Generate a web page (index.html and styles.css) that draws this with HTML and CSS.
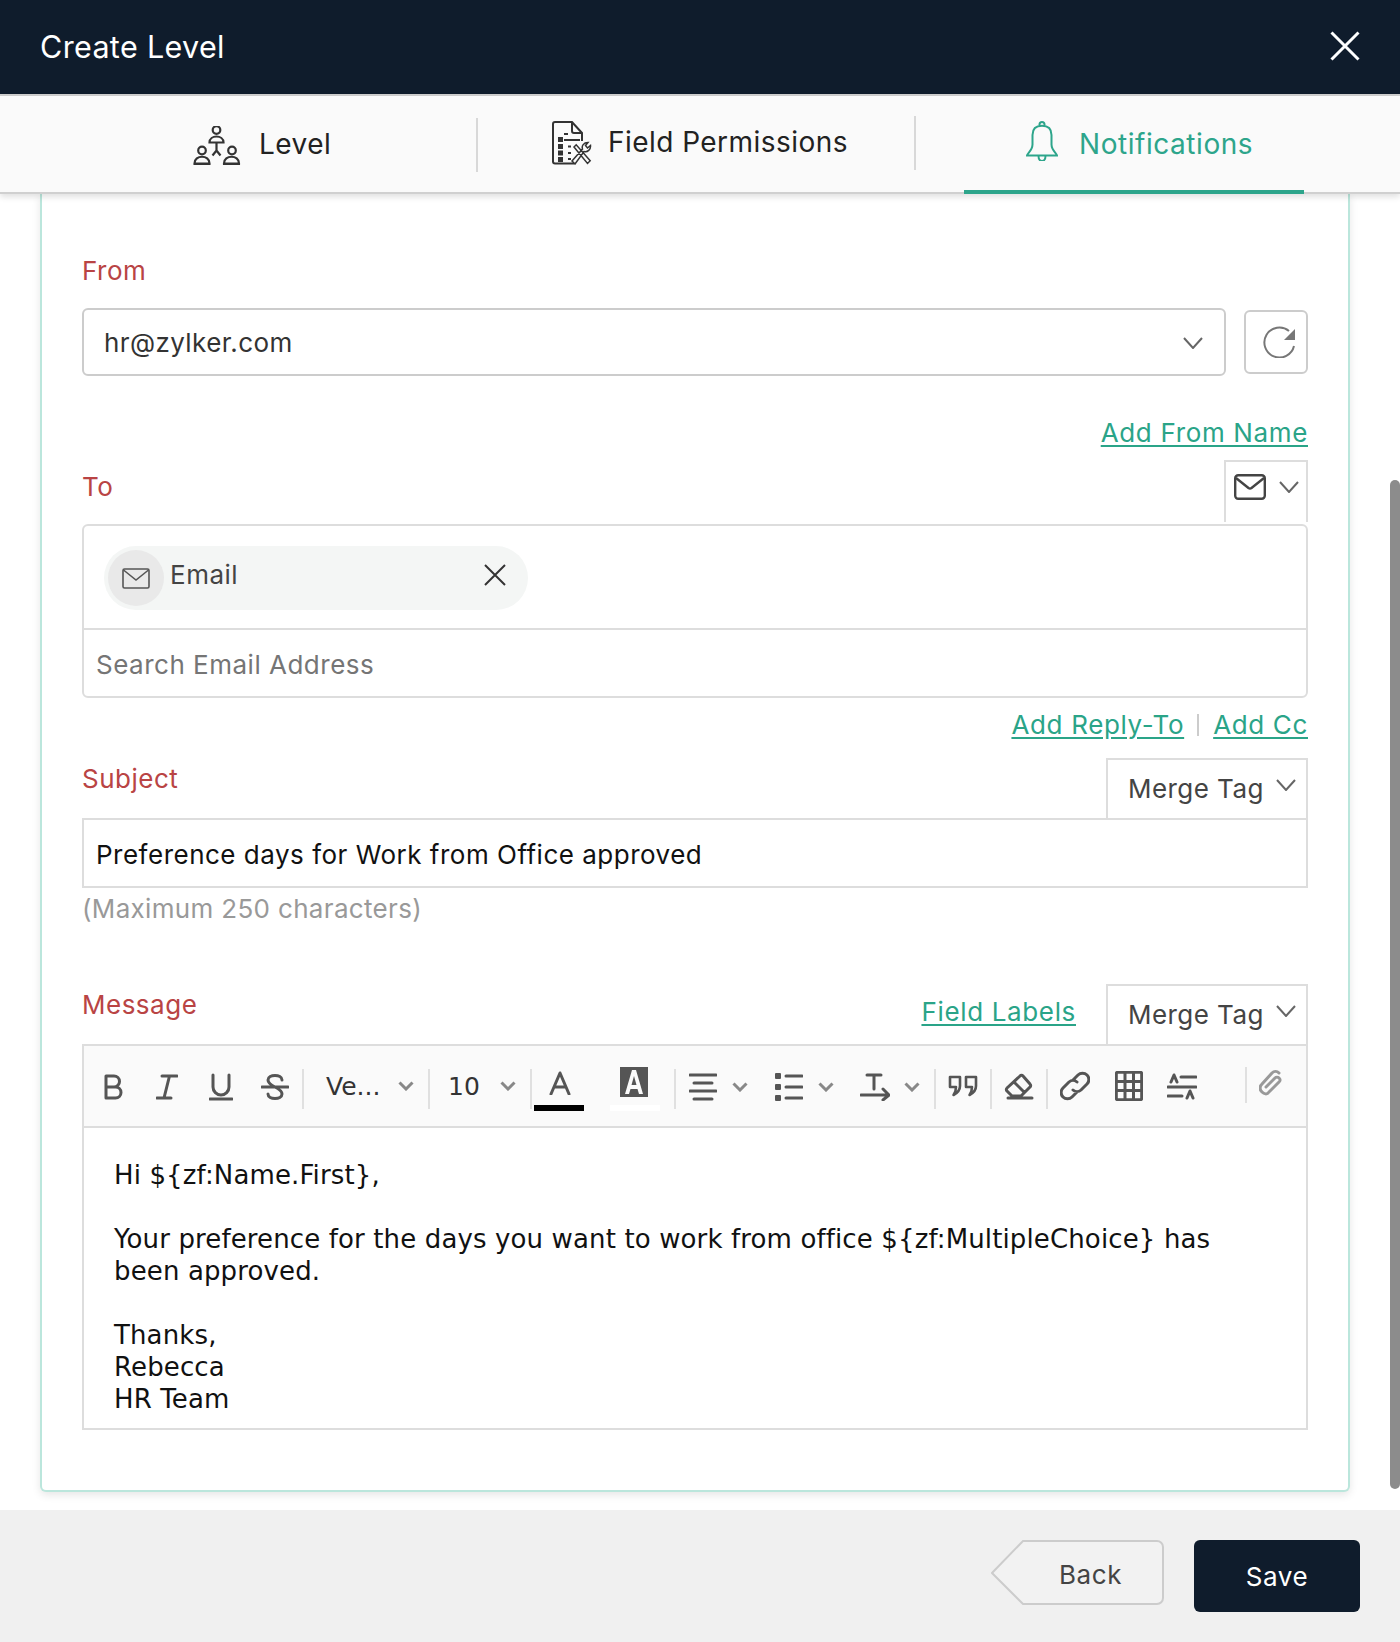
FILE: index.html
```html
<!DOCTYPE html>
<html lang="en">
<head>
<meta charset="utf-8">
<title>Create Level</title>
<link rel="stylesheet" href="styles.css">
</head>
<body>
<div class="app">
  <header class="top">
    <h1 class="title">Create Level</h1>
    <svg class="close" viewBox="0 0 30 30"><path d="M1.500 1.500l27 27M28.500 1.500l-27 27"/></svg>
  </header>
  <nav class="tabs">
    <div class="tab tab-a">
      <svg class="ic-level" viewBox="0 0 49 39"><circle cx="24.500" cy="4" r="3.800"/><path d="M17.500 16.500c0-8 14-8 14 0zM24.500 16.500v8M24.500 24.500l-4 5M24.500 24.500l4 5"/><circle cx="10" cy="24.500" r="3.800"/><path d="M2.500 37.500c0-9 15-9 15 0zM1.500 38h17"/><circle cx="40" cy="24.500" r="3.800"/><path d="M32 37.500c0-9 15-9 15 0zM31 38h17"/></svg>
      <span class="tab-t">Level</span>
    </div>
    <i class="tab-sep"></i>
    <div class="tab tab-b">
      <svg class="ic-field" viewBox="0 0 40 44"><path d="M22 42.500H3a2 2 0 0 1-2-2V3a2 2 0 0 1 2-2h17l10 11v8M20 1v9a2 2 0 0 0 2 2h8" /><path d="M12 13h4M12 19h16M16 25.500h3M16 32h3M16 38h3"/><path class="fill" d="M6 16h5v5H6zM6 23h5v5H6zM6 29.500h5v5H6zM6 36h5v5H6z"/><path class="thin" d="M22 26l2.200-2.200 14 16L35.500 42.500zM20 40l10.500-12c-1-3 1-6.500 5.500-6.500l-2.500 3 2 2.500 3-2.500c.5 4-3 7-6.500 6L23 43z"/></svg>
      <span class="tab-t tab-t-up">Field Permissions</span>
    </div>
    <i class="tab-sep tab-sep-up"></i>
    <div class="tab tab-c">
      <svg class="ic-bell" viewBox="0 0 34 40"><path d="M2 34.500c0-2 5.500-5 5.500-11V14C7.500 8 11 4.800 17 4.800S26.500 8 26.500 14v9.500c0 6 5.500 9 5.500 11zM14.500 5V3.500a2.500 2.500 0 0 1 5 0V5M13.500 35c0 6.500 7 6.500 7 0"/></svg>
      <span class="tab-t">Notifications</span>
    </div>
  </nav>
  <main class="main">
    <section class="card">
      <div class="label lab-from">From</div>
      <div class="from-row">
        <div class="select"><span>hr@zylker.com</span><svg class="chev" viewBox="0 0 20 12"><path d="M1 1l9 10 9-10"/></svg></div>
        <button class="refresh" type="button"><svg viewBox="0 0 32 32"><path d="M31 20A15 15 0 1 1 26 5"/><path class="solid" d="M32 3v11H21z"/></svg></button>
      </div>
      <div class="links links-name"><a class="link">Add From Name</a></div>
      <div class="to-row">
        <div class="label lab-to">To</div>
        <div class="to-drop">
          <svg class="mail-b" viewBox="0 0 32 26"><rect x="1.200" y="1.200" width="29.600" height="23.600" rx="3"/><path d="M2 4l12.500 10a2.500 2.500 0 0 0 3 0L30 4"/></svg>
          <svg class="chev" viewBox="0 0 20 12"><path d="M1 1l9 10 9-10"/></svg>
        </div>
      </div>
      <div class="to-box">
        <div class="tags">
          <div class="pill">
            <span class="pill-ic"><svg viewBox="0 0 28 21"><rect x="1" y="1" width="26" height="19" rx="1.500"/><path d="M1.500 2L14 12 26.500 2"/></svg></span>
            <span class="pill-t">Email</span>
            <svg class="pill-x" viewBox="0 0 22 22"><path d="M1 1l20 20M21 1L1 21"/></svg>
          </div>
        </div>
        <div class="search">Search Email Address</div>
      </div>
      <div class="links links-reply"><a class="link">Add Reply-To</a><i class="link-sep"></i><a class="link">Add Cc</a></div>
      <div class="sub-row">
        <div class="label lab-up">Subject</div>
        <div class="merge"><span>Merge Tag</span><svg class="chev" viewBox="0 0 20 12"><path d="M1 1l9 10 9-10"/></svg></div>
      </div>
      <div class="subject">Preference days for Work from Office approved</div>
      <div class="note">(Maximum 250 characters)</div>
      <div class="msg-row">
        <div class="label lab-up">Message</div>
        <a class="link field-l">Field Labels</a>
        <div class="merge"><span>Merge Tag</span><svg class="chev" viewBox="0 0 20 12"><path d="M1 1l9 10 9-10"/></svg></div>
      </div>
      <div class="editor">
        <div class="toolbar">
          <span class="cell c-54"><svg class="ti" width="20" height="26" viewBox="0 0 20 26"><path d="M3 2h8a5.500 5.500 0 0 1 0 11H3zM3 13h9.500a5.500 5.500 0 0 1 0 11H3z"/></svg></span>
          <span class="cell c-54"><svg class="ti" width="22" height="26" viewBox="0 0 22 26"><path d="M6 2h15M13.500 2L8 24M1 24h14"/></svg></span>
          <span class="cell c-54"><svg class="ti" width="24" height="28" viewBox="0 0 24 28"><path d="M4 2v12a8 8 0 0 0 16 0V2M1 26h22"/></svg></span>
          <span class="cell c-54"><svg class="ti" width="28" height="28" viewBox="0 0 28 28"><path d="M21 7c0-6-14-6-14 0 0 3 3 5 7 7 4 2 7 4 7 7 0 6-14 6-14 0M1 14h26"/></svg></span>
          <i class="sep"></i>
          <span class="cell c-font"><span class="tb-t">Ve...</span><svg class="tchev" viewBox="0 0 16 10"><path d="M1.500 1.500L8 8l6.500-6.500"/></svg></span>
          <i class="sep"></i>
          <span class="cell c-size"><span class="tb-t">10</span><svg class="tchev" viewBox="0 0 16 10"><path d="M1.500 1.500L8 8l6.500-6.500"/></svg></span>
          <i class="sep"></i>
          <span class="cell c-color"><svg class="ti" width="22" height="24" viewBox="0 0 22 24"><path d="M2 23L11 2l9 21M5.500 16h11"/></svg><i class="bar bar-k"></i></span>
          <span class="cell c-high"><svg width="28" height="30" viewBox="0 0 28 30"><path class="hl" fill-rule="evenodd" d="M0 0h28v30H0zM12 3L5 27h4l1.500-5h7l1.500 5h4L16 3zM14 9l2.500 9h-5z"/></svg><i class="bar bar-w"></i></span>
          <i class="sep"></i>
          <span class="cell c-align"><svg class="ti" width="28" height="28" viewBox="0 0 28 28"><path d="M1 2h26M5 10h18M1 18h26M5 26h18"/></svg><svg class="tchev" viewBox="0 0 16 10"><path d="M1.500 1.500L8 8l6.500-6.500"/></svg></span>
          <span class="cell c-list"><svg class="ti" width="28" height="28" viewBox="0 0 28 28"><path class="solid-t" d="M1 0h4a1 1 0 0 1 1 1v4a1 1 0 0 1-1 1H1a1 1 0 0 1-1-1V1a1 1 0 0 1 1-1zM1 11h4a1 1 0 0 1 1 1v4a1 1 0 0 1-1 1H1a1 1 0 0 1-1-1v-4a1 1 0 0 1 1-1zM1 22h4a1 1 0 0 1 1 1v4a1 1 0 0 1-1 1H1a1 1 0 0 1-1-1v-4a1 1 0 0 1 1-1z" /><path d="M11 3h16M11 14h16M11 25h16"/></svg><svg class="tchev" viewBox="0 0 16 10"><path d="M1.500 1.500L8 8l6.500-6.500"/></svg></span>
          <span class="cell c-dir"><svg class="ti" width="30" height="28" viewBox="0 0 30 28"><path d="M7 2h14M14 2v14M1 22h26M23 16l6 6-6 5"/></svg><svg class="tchev" viewBox="0 0 16 10"><path d="M1.500 1.500L8 8l6.500-6.500"/></svg></span>
          <i class="sep"></i>
          <span class="cell c-quote"><svg class="ti quote" width="30" height="22" viewBox="0 0 30 22"><path d="M2 2h10v9c0 4-2.500 7-6.500 9 1.500-2 2.500-5 2.500-8H2zM18 2h10v9c0 4-2.500 7-6.500 9 1.500-2 2.500-5 2.500-8h-6z"/></svg></span>
          <i class="sep"></i>
          <span class="cell c-quote"><svg class="ti" width="30" height="28" viewBox="0 0 30 28"><path d="M16 4L3 16a2 2 0 0 0 0 3l5 5h9l9-9a2 2 0 0 0 0-3l-7-8a2 2 0 0 0-3 0zM10 10l10 10M4 26h24"/></svg></span>
          <i class="sep"></i>
          <span class="cell c-link"><svg class="ti" width="30" height="30" viewBox="0 0 30 30"><path d="M13 9l5-5a6 6 0 0 1 9 9l-6 6a6 6 0 0 1-8 0M17 21l-5 5a6 6 0 0 1-9-9l6-6a6 6 0 0 1 8 0"/></svg></span>
          <span class="cell c-table"><svg class="ti" width="28" height="30" viewBox="0 0 28 30"><rect x="1.300" y="1.300" width="25.400" height="27.400" rx="1.500"/><path d="M10 1v28M18.500 1v28M1 10.500h26M1 19.500h26"/></svg></span>
          <span class="cell c-lh"><svg class="ti" width="30" height="28" viewBox="0 0 30 28"><path d="M4 10l3-7 3 7M14 5h15M1 15h28M1 24h14M20 26l3-7 3 7"/></svg></span>
          <i class="sep sep-clip"></i>
          <span class="cell c-clip"><svg class="ti clip" width="24" height="26" viewBox="0 0 24 26"><path d="M20 3c-2-2-5-2-7 0L3 14c-3 3-2 6 0 8s5 3 7 0L20 12c2-2 1-3 0-4s-3-1-4 0L7 17"/></svg></span>
        </div>
        <div class="body">
          <p>Hi ${zf:Name.First},</p>
          <p>Your preference for the days you want to work from office ${zf:MultipleChoice} has been approved.</p>
          <p>Thanks,<br>Rebecca<br>HR Team</p>
        </div>
      </div>
    </section>
    <div class="scroll"></div>
  </main>
  <footer class="foot">
    <div class="back"><svg class="back-shape" viewBox="0 0 173 65" preserveAspectRatio="none"><path d="M32 1h134a6 6 0 0 1 6 6v51a6 6 0 0 1-6 6H32L1 33z"/></svg><span class="back-t">Back</span></div>
    <button class="save" type="button">Save</button>
  </footer>
</div>
</body>
</html>
```
FILE: styles.css
```css
* { box-sizing: border-box; }
html, body { margin: 0; padding: 0; }
body { font-family: Inter, "Liberation Sans", sans-serif; font-size: 26px; color: #222; background: #fff; }
svg { display: block; fill: none; flex: none; }
.app { height: 100vh; display: flex; flex-direction: column; overflow: hidden; }

.top { height: 96px; flex: none; background: #0f1c2c; border-bottom: 2px solid #cfcfcf; display: flex; align-items: center; justify-content: space-between; padding: 0 40px; position: relative; }
.title { margin: 0 0 1px; font-size: 30.500px; font-weight: 400; color: #fff; letter-spacing: .35px; }
.close { width: 30px; height: 30px; margin-bottom: 2px; }
.close path { stroke: #fff; stroke-width: 3; }

.tabs { height: 98px; flex: none; background: #fafafa; border-bottom: 2px solid #d0d0d0; display: flex; align-items: stretch; position: relative; z-index: 2; box-shadow: 0 3px 6px rgba(0,0,0,.12); }
.tab { display: flex; align-items: center; }
.tab-a { width: 476px; padding-left: 192px; }
.tab-b { width: 436px; padding-left: 74px; }
.tab-c { width: 340px; margin-left: 48px; padding-left: 61px; border-bottom: 4px solid #2da58b; height: 98px; color: #2da58b; }
.tab-t { font-size: 28px; letter-spacing: .5px; margin-left: 18px; }
.tab-c .tab-t { margin-left: 20px; margin-top: 2px; letter-spacing: .55px; }
.tab-t-up { margin-left: 16px; margin-bottom: 4px; letter-spacing: .45px; }
.tab-sep { width: 2px; height: 54px; margin-top: 22px; background: #d8d8d8; }
.tab-sep-up { margin-top: 20px; }
.ic-level { width: 49px; height: 39px; margin-top: 3px; }
.ic-level * { stroke: #333; stroke-width: 2.2; }
.ic-field { width: 40px; height: 44px; margin-top: -2px; }
.ic-field path { stroke: #333; stroke-width: 2; }
.ic-field .fill { fill: #333; stroke: none; }
.ic-field .thin { stroke-width: 1.500; }
.ic-bell { width: 34px; height: 40px; margin-top: -4px; }
.ic-bell path { stroke: #2da58b; stroke-width: 2; }

.main { flex: 1; min-height: 0; position: relative; }
.card { margin-left: 40px; width: 1310px; background: #fff; border: 2px solid #bbe6dc; border-top: 0; border-radius: 0 0 6px 6px; padding: 60px 40px 60px 40px; box-shadow: 0 3px 8px rgba(0,0,0,.1); }
.scroll { position: absolute; right: 0; top: 286px; width: 10px; height: 1009px; background: #8c8c8c; border-radius: 5px; }

.label { font-size: 26px; line-height: 34px; color: #b94444; letter-spacing: .5px; }
.lab-to { margin-bottom: 8px; }
.from-row { display: flex; align-items: center; margin-top: 20px; }
.select { width: 1144px; height: 68px; border: 2px solid #ccc; border-radius: 6px; display: flex; align-items: center; justify-content: space-between; padding: 0 21px 0 20px; color: #333; letter-spacing: .4px; }
.select .chev { margin-top: 1px; }
.chev { width: 20px; height: 12px; }
.chev path { stroke: #666; stroke-width: 2; }
.refresh { width: 64px; height: 64px; margin-left: 18px; padding: 0; background: #fff; border: 2px solid #ccc; border-radius: 6px; display: flex; align-items: center; justify-content: center; }
.refresh svg { width: 32px; height: 32px; margin-left: 6px; }
.refresh path { stroke: #777; stroke-width: 2; }
.refresh .solid { fill: #777; stroke: none; }

.links { display: flex; justify-content: flex-end; align-items: center; line-height: 34px; }
.links-name { margin-top: 40px; }
.links-reply { margin-top: 10px; }
.link { color: #2aa488; text-decoration: underline; text-underline-offset: 3px; letter-spacing: .65px; }
.link-sep { width: 2px; height: 22px; background: #ccc; margin: 0 14px 0 13px; }

.to-row { display: flex; justify-content: space-between; align-items: center; margin-top: 10px; height: 62px; }
.to-drop { width: 84px; height: 62px; border: 2px solid #ddd; border-bottom: 0; display: flex; align-items: center; gap: 13px; padding: 0 0 10px 8px; }
.mail-b { width: 32px; height: 26px; }
.mail-b * { stroke: #444; stroke-width: 2.400; }
.to-box { margin-top: 2px; height: 174px; border: 2px solid #ddd; border-radius: 6px; }
.tags { height: 104px; border-bottom: 2px solid #ddd; padding: 20px 0 0 20px; }
.pill { width: 424px; height: 64px; border-radius: 32px; background: #f4f6f5; display: flex; align-items: center; padding-left: 4px; }
.pill-ic { width: 56px; height: 56px; border-radius: 50%; background: #e9e9e9; display: flex; align-items: center; justify-content: center; }
.pill-ic svg { width: 28px; height: 21px; margin-top: 1px; }
.pill-ic * { stroke: #555; stroke-width: 1.600; }
.pill-t { margin: 0 0 8px 6px; color: #444; letter-spacing: .5px; flex: 1; }
.pill-x { width: 22px; height: 22px; margin-right: 22px; margin-bottom: 6px; }
.pill-x path { stroke: #333; stroke-width: 2; }
.search { padding: 18px 0 0 12px; line-height: 34px; color: #757575; letter-spacing: .5px; }

.sub-row, .msg-row { display: flex; align-items: flex-end; height: 60px; }
.sub-row { margin-top: 16px; justify-content: space-between; }
.msg-row { margin-top: 58px; }
.msg-row .label { flex: 1; }
.lab-up { margin-bottom: 22px; }
.field-l { margin-right: 30px; margin-bottom: 17px; }
.merge { width: 202px; height: 60px; border: 2px solid #ddd; border-bottom: 0; display: flex; align-items: center; padding: 0 0 2px 20px; color: #444; letter-spacing: .45px; }
.merge span { flex: 1; }
.merge .chev { margin-right: 10px; margin-bottom: 6px; }
.subject { height: 70px; border: 2px solid #ddd; padding: 2px 12px 0; display: flex; align-items: center; color: #111; letter-spacing: .5px; }
.note { margin-top: 4px; line-height: 34px; color: #999; letter-spacing: .33px; }

.editor { border: 2px solid #ddd; }
.toolbar { height: 82px; background: #fafafa; border-bottom: 2px solid #ddd; display: flex; align-items: center; padding-left: 2px; }
.cell { height: 44px; display: flex; align-items: center; justify-content: center; position: relative; flex: none; }
.sep { width: 2px; height: 40px; background: #e0e0e0; flex: none; margin-top: 6px; }
.c-54 { width: 54px; margin-top: 2px; }
.ti path, .ti rect { stroke: #555; stroke-width: 3; stroke-linecap: round; stroke-linejoin: round; }
.ti .solid-t { fill: #555; stroke: none; }
.tchev { width: 16px; height: 10px; }
.tchev path { stroke: #888; stroke-width: 3; }
.tb-t { font-size: 25px; color: #333; font-family: "DejaVu Sans", sans-serif; }
.c-font { width: 124px; justify-content: flex-start; padding-left: 22px; gap: 18px; }
.c-size { width: 100px; justify-content: flex-start; padding-left: 18px; gap: 20px; }
.c-color { width: 100px; justify-content: flex-start; padding-left: 17px; margin-top: -6px; }
.c-high { width: 54px; justify-content: flex-start; margin-left: -12px; margin-top: -6px; }
.c-high svg { margin-top: -3px; }
.hl { fill: #555; }
.bar { position: absolute; top: 44px; height: 6px; width: 50px; }
.bar-k { background: #000; left: 2px; }
.bar-w { background: #fff; left: -10px; }
.c-align { width: 81px; justify-content: flex-start; padding-left: 13px; gap: 15px; margin-top: 2px; }
.c-list { width: 86px; justify-content: flex-start; padding-left: 18px; gap: 15px; margin-top: 2px; }
.c-dir { width: 91px; justify-content: flex-start; padding-left: 17px; gap: 14px; margin-top: 2px; }
.c-quote { width: 54px; margin-top: 0; }
.c-link { width: 55px; margin-top: -1px; padding-right: 2px; }
.c-table { width: 53px; margin-top: -1px; padding-right: 2px; }
.c-lh { width: 52px; margin-top: -1px; }
.sep-clip { margin-left: 37px; margin-top: -2px; height: 36px; }
.c-clip { width: 48px; margin-top: -6px; }
.clip path { stroke: #999; }
.quote path { stroke-width: 2.600; }
.body { height: 300px; padding: 31px 60px 0 30px; font-family: "DejaVu Sans", Verdana, sans-serif; font-size: 26px; line-height: 32px; color: #111; letter-spacing: .13px; }
.body p { margin: 0 0 32px; }

.foot { height: 132px; flex: none; background: #f0f0f0; display: flex; align-items: flex-start; justify-content: flex-end; padding: 30px 40px 0 0; }
.back { width: 173px; height: 65px; position: relative; display: flex; align-items: center; padding: 3px 0 0 68px; color: #444; letter-spacing: .6px; }
.back-shape { position: absolute; left: 0; top: 0; width: 173px; height: 65px; }
.back-shape path { fill: #f2f2f2; stroke: #ccc; stroke-width: 2; }
.back-t { position: relative; }
.save { width: 166px; height: 72px; margin-left: 30px; border: 0; border-radius: 6px; background: #0f1c2c; color: #fff; font: 400 26px Inter, sans-serif; letter-spacing: .6px; }
```
